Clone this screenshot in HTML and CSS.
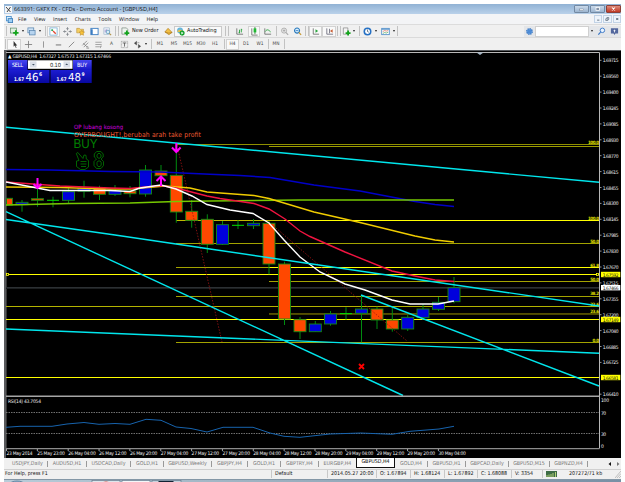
FILE: index.html
```html
<!DOCTYPE html>
<html lang="en">
<head>
  <meta charset="UTF-8" />
  <meta name="viewport" content="width=device-width, initial-scale=1.0" />
  <title>663391: GKFX FX - CFDs - Demo Account - [GBPUSD,H4]</title>
  <link rel="stylesheet" href="styles.css">
</head>
<body>
  <div class="window">
    <header class="titlebar">
      <svg class="app-icon" viewBox="0 0 7 7"><rect width="7" height="7" fill="#f4f6f8"/><path d="M1 1l4.5 5M5.5 1L2 6" stroke="#333" stroke-width=".9"/></svg>
      <span class="title">663391: GKFX FX - CFDs - Demo Account - [GBPUSD,H4]</span>
      <div class="win-buttons">
        <span class="win-btn"><svg viewBox="0 0 14 8"><rect x="4.5" y="4" width="5" height="2" fill="#fff" stroke="#56657a" stroke-width=".5"/></svg></span>
        <span class="win-btn"><svg viewBox="0 0 14 8"><rect x="5" y="2" width="4.5" height="4" fill="#8393a8" stroke="#fff"/></svg></span>
        <span class="win-btn close"><svg viewBox="0 0 14 8"><path d="M5 2l4 4M9 2L5 6" stroke="#fff" stroke-width="1.4"/></svg></span>
      </div>
    </header>

    <nav class="menubar">
      <svg class="menu-icon" viewBox="0 0 8 8"><rect x=".5" y=".5" width="5.5" height="5" fill="#d9efff" stroke="#4c91cd"/><rect x="2.5" y="3" width="5" height="4.5" fill="#9ed0f5" stroke="#3d7fba"/></svg>
      <span>File</span><span>View</span><span>Insert</span><span>Charts</span><span>Tools</span><span>Window</span><span>Help</span>
      <div class="mdi-buttons">
        <i><svg viewBox="0 0 8 8"><path d="M2.5 5.5h3" stroke="#456"/></svg></i>
        <i><svg viewBox="0 0 8 8"><path d="M3.5 3.5V2H6v2.5H5M2 3.7h2.8V6H2z" fill="none" stroke="#456" stroke-width=".8"/></svg></i>
        <i><svg viewBox="0 0 8 8"><path d="M2.6 2.6l2.8 2.8M5.4 2.6L2.6 5.4" stroke="#345"/></svg></i>
      </div>
    </nav>

    <div class="toolbar standard">
      <b class="sep"></b>
      <i><svg viewBox="0 0 10 10"><rect x=".7" y="1.2" width="6.6" height="5.5" fill="#dff1df" stroke="#5d8b6b" stroke-width=".8"/><path d="M6.5 3.5v6M3.5 6.5h6" stroke="#12a51b" stroke-width="2"/></svg></i>
      <i class="caret"></i>
      <i><svg viewBox="0 0 10 10"><rect x="1" y="1" width="6.5" height="5.5" fill="#cfe3f6" stroke="#5683ad" stroke-width=".8"/><rect x="2.8" y="4" width="6.2" height="4.8" fill="#b7d4ef" stroke="#5683ad" stroke-width=".8"/></svg></i>
      <i class="caret"></i>
      <b class="sep"></b>
      <i class="pressed"><svg viewBox="0 0 10 10"><rect x="1" y="1" width="8" height="8" fill="#fff" stroke="#68a6cf" stroke-width=".8"/><path d="M2.5 3.5h2M3.5 2.5v2" stroke="#19a34a" stroke-width="1.2"/><path d="M4.5 4.5l3 3" stroke="#e14b35" stroke-width="1.5"/></svg></i>
      <i><svg viewBox="0 0 10 10"><path d="M5 .8v8.4M.8 5h8.4M3.7 2L5 .8 6.3 2M3.7 8L5 9.2 6.3 8M2 3.7L.8 5 2 6.3M8 3.7L9.2 5 8 6.3" fill="none" stroke="#6a7077" stroke-width=".8"/><circle cx="5" cy="5" r="1.3" fill="#f0f0f0"/></svg></i>
      <i><svg viewBox="0 0 10 10"><path d="M.8 1.5h3l1 1h3.5v4H.8z" fill="#f4cf62" stroke="#b4862c" stroke-width=".6"/><path d="M6.5 3.5l1 1.9 2 .2-1.5 1.5.4 2.1-1.9-1-1.9 1 .4-2.1L3.5 5.6l2-.2z" fill="#f7c33a" stroke="#b07a1a" stroke-width=".5"/></svg></i>
      <i><svg viewBox="0 0 10 10"><rect x="1" y="1.5" width="8" height="7" fill="#fff" stroke="#3a7cc2"/><path d="M1 2.5h2v6H1z" fill="#3a7cc2"/></svg></i>
      <i><svg viewBox="0 0 10 10"><rect x="1" y="1" width="6" height="7" fill="#eef3f8" stroke="#8aa6c2" stroke-width=".6"/><path d="M2.5 3v3M4 2.5v3" stroke="#63a" stroke-width=".5"/><circle cx="5.5" cy="5.5" r="2" fill="#d5ecf8" stroke="#5593b5" stroke-width=".8"/><path d="M7 7l2 2" stroke="#b09246" stroke-width="1.2"/></svg></i>
      <b class="sep double"></b>
      <i class="labeled"><svg viewBox="0 0 10 10"><path d="M1 1h5l1.5 1.5V8H1z" fill="#eef4ee" stroke="#6d7d72" stroke-width=".7"/><path d="M6.5 4v5.5M3.8 6.7h5.4" stroke="#13a41c" stroke-width="2"/></svg><em>New Order</em></i>
      <i><svg viewBox="0 0 10 10"><path d="M1 5.5L4.5 1.5 9 6 5.5 8.5z" fill="#f3c044" stroke="#a9761b" stroke-width=".7"/><path d="M1 5.5l4.3 1.3L9 6" fill="none" stroke="#a9761b" stroke-width=".7"/></svg></i>
      <i class="labeled auto"><svg viewBox="0 0 10 10"><circle cx="4.5" cy="3.8" r="3.3" fill="#65b5dd"/><path d="M1 5c2-2.5 5-2.5 7 0L5 6z" fill="#e3c04a"/><circle cx="6.8" cy="6.8" r="2.8" fill="#16a02b"/><path d="M6 5.4v2.8l2.4-1.4z" fill="#fff"/></svg><em>AutoTrading</em></i>
      <b class="sep double"></b>
      <i><svg viewBox="0 0 10 10"><path d="M2 1.5V8h7" fill="none" stroke="#666" stroke-width=".9"/><path d="M5 3v4M4 6h1M7 2v4M7 3h1" stroke="#25a33a"/></svg></i>
      <i class="pressed"><svg viewBox="0 0 10 10"><path d="M2 1.5V9h6.5" fill="none" stroke="#666" stroke-width=".9"/><path d="M5.5 0v8" stroke="#176b20" stroke-width=".8"/><rect x="4" y="1.5" width="3" height="4.5" fill="#20b832"/></svg></i>
      <i><svg viewBox="0 0 10 10"><path d="M2 1.5V8h7" fill="none" stroke="#666" stroke-width=".9"/><path d="M2.5 5c2-3 3.5-2 6 .5" fill="none" stroke="#25a33a"/></svg></i>
      <b class="sep"></b>
      <i><svg viewBox="0 0 10 10"><circle cx="4.5" cy="4" r="2.8" fill="#eee" stroke="#999" stroke-width=".8"/><path d="M3 4h3M4.5 2.5v3" stroke="#999" stroke-width=".8"/><path d="M6.5 6l2.5 2.8" stroke="#aaa" stroke-width="1.3"/></svg></i>
      <i><svg viewBox="0 0 10 10"><circle cx="4.5" cy="4" r="2.8" fill="#d9efff" stroke="#2878bb" stroke-width="1.2"/><path d="M3 4h3" stroke="#2878bb" stroke-width=".9"/><path d="M6.5 6l2.5 2.8" stroke="#c79a35" stroke-width="1.4"/></svg></i>
      <b class="sep double"></b>
      <i class="pressed"><svg viewBox="0 0 10 10"><path d="M2.5 1.5V8H9" fill="none" stroke="#666" stroke-width=".9"/><path d="M5 2.5v4l3-2z" fill="#25a33a"/></svg></i>
      <i class="pressed"><svg viewBox="0 0 10 10"><path d="M2 1.5V8h7M5 2v5" fill="none" stroke="#667" stroke-width=".9"/><path d="M8.5 2.5v4l-3-2z" fill="#c85b30"/></svg></i>
      <b class="sep double"></b>
      <i><svg viewBox="0 0 10 10"><path d="M1.5 1h5v7h-5z" fill="#f4f4f4" stroke="#777" stroke-width=".7"/><path d="M6.8 4v5.5M4 6.7h5.5" stroke="#13a41c" stroke-width="2"/></svg></i>
      <i class="caret"></i>
      <b class="sep"></b>
      <i><svg viewBox="0 0 10 10"><circle cx="5" cy="5" r="3.6" fill="#fff" stroke="#2671c4" stroke-width="1.7"/><path d="M5 2.8V5l1.5.8" fill="none" stroke="#234" stroke-width=".7"/></svg></i>
      <i class="caret"></i>
      <i><svg viewBox="0 0 10 10"><rect x=".8" y="1.5" width="8.4" height="7" fill="#fff" stroke="#4b8ac6" stroke-width=".9"/><path d="M1 2.5h8" stroke="#4b8ac6"/><path d="M2 5l2-1 2 .5L8 4" fill="none" stroke="#d0563c" stroke-width=".7"/><path d="M2 7.2l2-1 2 .5 2-1" fill="none" stroke="#3a9a48" stroke-width=".7"/></svg></i>
      <i class="caret"></i>
      <b class="end"></b>
      <span></span>
      <i class="tool-box"><svg viewBox="0 0 10 10"><circle cx="5" cy="5" r="3" fill="#79aee6" stroke="#3b78c4" stroke-width="1.6" stroke-dasharray="1.5 .8"/><circle cx="5" cy="5" r="2.2" fill="#4d8bd6"/></svg></i>
      <input class="search" type="text" aria-label="Search">
      <i class="caret tool-box"></i>
      <i class="tool-box"><svg viewBox="0 0 10 10"><circle cx="6" cy="3.7" r="2.5" fill="#eaf4ff" stroke="#3674c5"/><path d="M4 5.6L1.5 8.5" stroke="#3674c5" stroke-width="1.3"/></svg></i>
      <i class="tool-box"><svg viewBox="0 0 10 10"><path d="M1 1.5h8v5.8H6L5 9 4 7.3H1z" fill="#53679d"/><path d="M5 3v3M4 4h2" stroke="#fff" stroke-width=".9"/></svg></i>
    </div>

    <div class="toolbar studies">
      <b class="sep"></b>
      <i class="pressed"><svg viewBox="0 0 10 10"><path d="M4 1v6.5l1.4-1.3L6.5 9l.8-.4L6.2 6H8z" fill="#333"/></svg></i>
      <i><svg viewBox="0 0 10 10"><path d="M5 1v8M1 5h8" stroke="#777" stroke-width=".9"/></svg></i>
      <i><svg viewBox="0 0 10 10"><path d="M5 1.5v7" stroke="#777" stroke-width=".8"/></svg></i>
      <i><svg viewBox="0 0 10 10"><path d="M2 5.5h6" stroke="#666"/></svg></i>
      <i><svg viewBox="0 0 10 10"><path d="M2 8l6-6" stroke="#777" stroke-width=".9"/></svg></i>
      <i><svg viewBox="0 0 10 10"><path d="M1.5 6l5-5M3 8l5-5M2.5 3.5l4 4M6 9h3M6 7.5h2" stroke="#777" stroke-width=".8"/></svg></i>
      <i><svg viewBox="0 0 10 10"><path d="M1.5 2.5h7M1.5 5h7M1.5 7.5h5M7.2 9V6.8h1.6" fill="none" stroke="#888" stroke-width=".8"/></svg></i>
      <i>A</i>
      <i><svg viewBox="0 0 10 10"><rect x="1.5" y="1.5" width="7" height="7" fill="none" stroke="#888" stroke-width=".7" stroke-dasharray="1 .5"/><path d="M3 3.3h4M5 3.3v4" stroke="#555" stroke-width=".9"/></svg></i>
      <i><svg viewBox="0 0 10 10"><path d="M1.5 3.5L4 1.5v4zM5 3h2M8.5 7L6 5v4z" fill="#444" stroke="#444" stroke-width=".5"/></svg></i>
      <i class="caret"></i>
      <b class="sep"></b>
      <i>M1</i><i>M5</i><i>M15</i><i>M30</i><i>H1</i>
      <b class="sep"></b>
      <i class="pressed">H4</i><i>D1</i><i>W1</i>
      <b class="sep"></b>
      <i>MN</i>
      <b class="end"></b>
    </div>

    <main class="chart">
      <svg id="chart" viewBox="4 50 617 408">
        <rect x="4" y="50" width="617" height="408" fill="#000"/>
        <path d="M4 50.5H621" stroke="#55585c"/>
        <path d="M5 51v407" stroke="#77797b" stroke-width="1.5"/>
        <path d="M6.5 51v398" stroke="#444" stroke-width=".8"/>
        <path d="M6 52.5H599.5V448.5" fill="none" stroke="#b8b8b8"/>
        <path d="M476.5 52.5h7l-3.5 2.5z" fill="#a9b9c9"/>

        <g id="levels"></g>
        <g id="candles"></g>

        <g class="fibo">
          <path d="M177 145L222 342M269 222L407 341"/>
        </g>
        <g class="ma">
          <path class="navy" d="M6 169.5L50 170 110 171.5 160 172 210 174.3 240 175.5 270 177.5 314 185 360 191 415 201.5 435 204.5 454 206.5"/>
          <path class="lime" d="M6 205L70 203.5 130 203 176 201.5 210 201 300 200 454 200"/>
          <path class="gold" d="M6 187L60 187.5 110 189 130 189 165 186 190 188 207 192 254 195.5 269 198.5 314 212 360 222.5 415 236 435 240 454 242"/>
          <path class="crimson" d="M6 182L60 186 110 188 130 188.5 161 185.5 176 188 207 196 220 198.5 254 203.5 269 209 285 219 300 231 310 236.5 345 252 392 271 415 276 435 280 454 281.5"/>
          <path class="white" d="M6 182L50 190.5 110 190.5 130 191.5 140 188 161 185 176 189 192 196 207 204.5 230 210 253 213.5 269 223 284 240 300 257 320 272 345 284 365 290 392 300 410 304 438 304 454 301"/>
        </g>
        <g class="trend">
          <path d="M6 127.3L599 182.3M6 219.5L115 235 210 249 599 306M6 211.7L403 395.5M361 295L599 386M6 329L599 353.3"/>
        </g>

        <g class="arrows">
          <path d="M37.5 178v10M33.5 184l4 4 4-4M176.300 143v9M172 147.5l4.300 4.5 4.300-4.5M161 186v-9M156.500 181l4.5-4.5 4.5 4.5"/>
        </g>
        <path d="M359 364l5 5M364 364l-5 5" stroke="#f00" stroke-width="1.8"/>
        <rect x="6.5" y="273.5" width="2" height="2" fill="#000" stroke="#ff0" stroke-width=".8"/>
        <rect x="596.5" y="273.5" width="2" height="2" fill="#000" stroke="#ff0" stroke-width=".8"/>

        <text class="note magenta" x="74" y="128.7" textLength="49">OP lubang kosong</text>
        <text class="note tomato" x="74" y="136.8" textLength="127">OVERBOUGHT!,berubah arah take profit</text>
        <text class="buy" x="73.5" y="147.6" textLength="24" lengthAdjust="spacingAndGlyphs">BUY</text>
        <g class="hand">
          <path d="M76.300 153.500l1.500-1 5.200 6 1-3.500 2 .3.300 3.700 2.200 1.500v6.500l-3.500 2.500h-4.500l-4-3v-5.500l2.500-.5zM80.500 161.500h6M80.500 164h6M81 166.500h5"/>
          <path d="M96.700 151.500h4.200l2.300 2.500v3l-2.200 2 2.500 2.500v4l-2.500 3h-4.500l-2.500-3v-4l2.500-2.500-2.200-2v-3zM98 153.500h2l1 1.500v2l-2 1.500-2-1.500v-2zM98 161h2.200l1 1.500v2.500l-1 1.500H98l-1-1.500v-2.500z"/>
        </g>

        <text class="info" x="8" y="58.3" textLength="103">▲ GBPUSD,H4  1.67327 1.67573 1.67315 1.67466</text>

        <!-- one click trading panel -->
        <defs>
          <linearGradient id="blue" x1="0" y1="0" x2="0" y2="1">
            <stop offset="0" stop-color="#4646f2"/><stop offset="1" stop-color="#1717c8"/>
          </linearGradient>
          <linearGradient id="deep" x1="0" y1="0" x2="0" y2="1">
            <stop offset="0" stop-color="#1c1cd2"/><stop offset="1" stop-color="#0808a0"/>
          </linearGradient>
        </defs>
        <g class="trade">
          <rect x="8" y="60" width="19.5" height="10" fill="url(#blue)"/>
          <rect x="73" y="60" width="18.7" height="10" fill="url(#blue)"/>
          <rect x="8" y="70" width="41.5" height="13" fill="url(#deep)"/>
          <rect x="50.5" y="70" width="41.2" height="13" fill="url(#deep)"/>
          <rect x="28" y="60.3" width="44.5" height="8.5" fill="#fff"/>
          <rect x="30" y="61.3" width="6.5" height="6.2" fill="#d9dee8"/>
          <rect x="63.5" y="61.3" width="6.5" height="6.2" fill="#d9dee8"/>
          <path d="M32 64h2.8l-1.4 1.5zM65.3 65h2.8l-1.4-1.5z" fill="#456"/>
          <text x="12" y="66.9" textLength="11">SELL</text>
          <text x="77" y="66.9" textLength="10">BUY</text>
          <text x="50" y="66.6" textLength="11" class="lot">0.10</text>
          <text x="14" y="80.5" textLength="10" class="small" lengthAdjust="spacingAndGlyphs">1.67</text>
          <text x="25.5" y="80.5" textLength="13" class="big" lengthAdjust="spacingAndGlyphs">46</text>
          <text x="38.9" y="76" class="sup">6</text>
          <text x="56.5" y="80.5" textLength="10" class="small" lengthAdjust="spacingAndGlyphs">1.67</text>
          <text x="68" y="80.5" textLength="13" class="big" lengthAdjust="spacingAndGlyphs">48</text>
          <text x="81.5" y="76" class="sup">9</text>
        </g>

        <!-- RSI sub window -->
        <path d="M6 396.3H599.5" stroke="#a6a6a6" stroke-width="1.5"/>
        <path d="M6 448.7H599.5" stroke="#8c8c8c" stroke-width="1.3"/>
        <path d="M6 412.5H599M6 433.5H599" stroke="#8d8d8d" stroke-width=".8" stroke-dasharray="1.5 1"/>
        <path d="M6 427.3L20 426.3 52 426.3 67 424 84 422.5 99 424.3 115 423.5 130 424.3 146 419.3 161 420.3 176 427 191 428.5 207 432 223 427.3 253 427.3 270 433 284 436.3 300 437.3 330 434 361 433 392 434.3 410 431.3 439 429 454 426.3" fill="none" stroke="#1763ad"/>
        <text class="info" x="8" y="403" textLength="33">RSI(14) 43.7054</text>
        <text class="info" x="601" y="402" textLength="8">100</text>
        <text class="info" x="601" y="414.5" textLength="5">70</text>
        <text class="info" x="601" y="435.5" textLength="5">30</text>
        <text class="info" x="601" y="448">0</text>
        <g id="axis"></g>
      </svg>
    </main>

    <div class="tabs">
      <span>USDJPY,Daily</span><span>AUDUSD,H1</span><span>USDCAD,Daily</span><span>GOLD,H1</span><span>GBPUSD,Weekly</span><span>GBPJPY,H4</span><span>GOLD,H1</span><span>GBPTRY,H4</span><span class="last">EURGBP,H4</span><span class="active">GBPUSD,H4</span><span>GOLD,H4</span><span>GBPUSD,H1</span><span>GBPCAD,Daily</span><span>GBPUSD,M15</span><span>GBPNZD,H4</span>
      <svg class="scroller" viewBox="0 0 14 6"><path d="M4 1v4L1.5 3z" fill="#111"/><path d="M10 1v4l2.5-2z" fill="#777"/></svg>
    </div>

    <footer class="status">
      <span>For Help, press F1</span>
      <span>Default</span>
      <span>2014.05.27 20:00</span>
      <span>O: 1.67894</span>
      <span>H: 1.68124</span>
      <span>L: 1.67892</span>
      <span>C: 1.68088</span>
      <span>V: 3354</span>
      <span class="net"><svg viewBox="0 0 11 6"><rect width="11" height="6" fill="#3d6b45"/><path d="M1 6V4M3 6V3.5M5 6V3M7 6V2M9.5 6V1" stroke="#b8d37a"/></svg></span>
      <span class="traffic">207272/71 kb</span>
      <svg class="grip" viewBox="0 0 6 7"><path d="M0 7l6-7M2 7l4-4.5M4 7l2-2" stroke="#aaa" stroke-width=".7"/></svg>
    </footer>

    <div class="taskbar">
      <svg viewBox="0 0 617 4">
        <ellipse cx="13" cy="4" rx="7" ry="3" fill="#8fb3cf" stroke="#4f6f8c" stroke-width=".7"/>
        <rect x="66" y="2" width="8" height="2" fill="#cfa964"/>
        <rect x="88" y=".5" width="28" height="4" fill="#dde6ec" stroke="#667b8d" stroke-width=".7"/>
        <ellipse cx="102" cy="4" rx="4" ry="2.5" fill="#d94a3c"/>
        <rect x="118" y=".5" width="28" height="4" fill="#f4f7f9" stroke="#667b8d" stroke-width=".7"/>
        <rect x="148" y=".5" width="29" height="4" fill="#c5d3dd" stroke="#667b8d" stroke-width=".7"/>
        <rect x="155" y="1.5" width="14" height="3" fill="#fff" stroke="#123"/>
      </svg>
    </div>
  </div>

  <script>
    const NS = "http://www.w3.org/2000/svg";

    function add(parent, tag, attrs, text) {
      const el = document.createElementNS(NS, tag);
      for (const key in attrs) el.setAttribute(key, attrs[key]);
      if (text) el.textContent = text;
      document.getElementById(parent).appendChild(el);
    }

    // x start, y, colour
    const levels = [
      [176, 144.5, "#8f8f00"], [269, 146.5, "#9c9c00"],
      [176, 220.5, "#c0b800"], [284, 220.5, "#ffff00"],
      [176, 243.5, "#a3a300"], [176, 267.5, "#a3a300"], [269, 267.5, "#ffff00"],
      [6, 274.5, "#ffff00"], [269, 281.5, "#a3a300"],
      [6, 287.5, "#2c3033"], [6, 288.5, "#1c1f21"], [176, 296.5, "#a3a300"],
      [6, 306.5, "#b3b300"], [269, 313.5, "#555000"], [269, 314.5, "#4a4600"],
      [6, 319.5, "#ffff00"], [176, 342.5, "#a3a300"], [6, 377.5, "#ffff00"]
    ];
    levels.forEach(([x, y, c]) => add("levels", "path", { d: `M${x} ${y}H599`, stroke: c }));

    const ratios = [["100.0", 143.6], ["100.0", 219.6], ["50.0", 242.6], ["61.8", 266.6], ["50.0", 280.6],
      ["38.2", 295.4], ["23.6", 305.6], ["23.6", 313], ["0.0", 341.6]];
    ratios.forEach(([t, y]) => {
      const w = t.length * 2.2;
      add("levels", "text", { x: 599 - w, y: y, textLength: w, class: "ratio" }, t);
    });

    // x, high, body top, body bottom, low, type
    const candles = [
      [6.5, 198, 198.3, 205, 206, "down"], [22, 200, 202.3, 204.7, 211.7, "up"],
      [37.5, 189, 198.7, 200.3, 206.7, "down"], [53, 196.7, 200.3, 200.3, 207.3, "doji"],
      [68.5, 187.7, 191.7, 200.3, 204, "up"], [84, 180.7, 188.3, 191.3, 197.7, "up"],
      [99.5, 185.7, 187.7, 194.3, 200, "down"], [115, 185, 190.7, 194.3, 196, "up"],
      [130, 186, 191, 193.7, 197.3, "down"], [145.5, 165, 170, 194, 196.7, "up"],
      [161, 165, 171, 175.7, 185, "down"], [176.3, 144, 175.3, 212, 222.7, "down"],
      [191.7, 200, 211.3, 220.3, 227.7, "down"], [207.3, 214.3, 219.3, 244.3, 253, "down"],
      [222.5, 221, 224.7, 244.3, 245, "up"], [238, 220.3, 225.3, 225.3, 229, "doji"],
      [253.5, 219, 223.3, 225.7, 229, "up"], [269, 221, 223.3, 264, 274.3, "down"],
      [284.5, 261.7, 264, 319, 325, "down"], [300, 317, 319.7, 331.7, 339, "down"],
      [315.3, 321, 324, 331.7, 332, "up"], [330.5, 311, 314, 324, 325.7, "up"],
      [346, 307.3, 313.6, 313.6, 319.7, "doji"], [361.5, 295, 309, 313.3, 342.3, "up"],
      [377, 306.7, 309, 320, 329, "down"], [392.3, 306.7, 320, 329, 331.7, "down"],
      [407.7, 315, 317.3, 329, 331, "up"], [423, 304.3, 309, 317.7, 320, "up"],
      [438.5, 297, 302.3, 309.3, 311, "up"], [454, 277, 287.7, 301.7, 303.3, "up"]
    ];
    candles.forEach(([x, high, top, bottom, low, type]) => {
      add("candles", "path", { d: `M${x} ${high}V${low}`, class: "wick" });
      if (type === "doji") {
        add("candles", "path", { d: `M${x - 6} ${top}h12`, class: "doji" });
      } else {
        const left = Math.max(x - 6, 6.5);
        add("candles", "rect", { x: left, y: top, width: x + 6 - left, height: bottom - top, class: type });
      }
    });

    const prices = ["1.69715", "1.69560", "1.69400", "1.69245", "1.69085", "1.68930", "1.68770", "1.68615",
      "1.68455", "1.68300", "1.68145", "1.67985", "1.67830", "1.67670", "1.67515", "1.67355", "1.67200",
      "1.67040", "1.66885", "1.66725", "", "1.66410"];
    prices.forEach((p, i) => {
      if (!p) return;
      const y = 60.3 + i * 15.9;
      add("axis", "path", { d: `M599.5 ${y}h2`, stroke: "#b8b8b8", "stroke-width": 0.8 });
      add("axis", "text", { x: 602.7, y: y + 2, textLength: 15.8, class: "info" }, p);
    });

    const marks = [["1.67592", 274.5, "#ffff00"], ["1.67466", 287.7, "#ffffff"],
      ["1.67149", 319.5, "#ffff00"], ["1.66581", 377.5, "#ffff00"]];
    marks.forEach(([p, y, c]) => {
      add("axis", "rect", { x: 601, y: y - 2.7, width: 19.3, height: 5.4, fill: c });
      add("axis", "text", { x: 602.7, y: y + 2, textLength: 15.8, class: "mark" }, p);
    });

    const dates = ["23 May 2014", "25 May 23:00", "26 May 04:00", "26 May 12:00", "26 May 20:00", "27 May 04:00",
      "27 May 12:00", "27 May 20:00", "28 May 04:00", "28 May 12:00", "28 May 20:00", "29 May 04:00",
      "29 May 12:00", "29 May 20:00", "30 May 04:00"];
    dates.forEach((d, i) => {
      const x = 6.5 + i * 30.85;
      add("axis", "path", { d: `M${x} 449v2`, stroke: "#ccc", "stroke-width": 0.8 });
      add("axis", "text", { x: x, y: 455.2, textLength: i ? 27.5 : 26, class: "info" }, d);
    });
  </script>
</body>
</html>
```
FILE: styles.css
```css
* {
  box-sizing: border-box;
}
body {
  margin: 0;
  padding: 4px 4px 0;
  height: 482px;
  overflow: hidden;
  background: #fff;
  font-family: "DejaVu Sans Condensed", "DejaVu Sans", sans-serif;
  font-stretch: condensed;
  font-size: 5.3px;
  color: #111;
  text-rendering: geometricPrecision;
}
i, em {
  font-style: normal;
}
svg {
  display: block;
}
.window {
  display: flex;
  flex-direction: column;
  width: 617px;
  height: 478px;
  overflow: hidden;
  background: #f0f0f0;
}
.window > * {
  flex-shrink: 0;
}

/* title and menu */
.titlebar {
  display: flex;
  align-items: center;
  height: 10px;
  padding-left: 1px;
  background: linear-gradient(#91b2d4, #b9d1ea);
  font-family: "Open Sans", sans-serif;
  font-stretch: normal;
  font-size: 5.6px;
}
.app-icon {
  width: 7px;
  height: 7px;
  margin-right: 2px;
}
.title {
  white-space: nowrap;
}
.win-buttons {
  display: flex;
  gap: 1px;
  margin-left: auto;
}
.win-btn {
  width: 15px;
  height: 8px;
  border: 1px solid #7289a3;
  border-radius: 1px;
  background: linear-gradient(#c9d9ea, #9cb5d0);
}
.win-btn svg {
  width: 13px;
  height: 6px;
}
.win-btn.close {
  border-color: #8b4038;
  background: linear-gradient(#df8d7d, #c03823);
}
.menubar {
  display: flex;
  align-items: center;
  height: 11px;
  padding-left: 2px;
  background: #f3f4f6;
  border-bottom: 1px solid #dcdcdc;
  font-family: "Open Sans", sans-serif;
  font-stretch: normal;
  font-size: 5.3px;
}
.menu-icon {
  width: 7px;
  height: 7px;
  margin-right: 5px;
}
.menubar > span {
  margin-right: 7.5px;
}
.mdi-buttons {
  display: flex;
  gap: 1px;
  margin-left: auto;
}
.mdi-buttons i {
  width: 8.5px;
  height: 8px;
  border: 1px solid #c2d3e6;
  background: #eef4fb;
}
.mdi-buttons svg {
  width: 6.5px;
  height: 6px;
}

/* toolbars */
.toolbar {
  display: grid;
  align-items: center;
}
.standard {
  height: 12px;
  grid-template-columns: 5px 10px 7px 11px 6px 4px 13px 14px 13px 14px 13px 6px 42px 12px 48px 9px 17px 12px 14px 4px 13px 13px 5px 13px 14px 6px 8px 7px 4px 12px 6px 12px 5px 3px 1fr 11px 54px 6px 12px 14px;
}
.studies {
  height: 13px;
  grid-template-columns: 3px 14px 14px 17px 12px 14px 14px 13px 13px 13px 12px 6px 4px 14px 14px 13px 14px 14px 4px 13px 14px 14px 2px 14px 2px;
  border-top: 1px solid #dadada;
}
.toolbar i {
  display: flex;
  align-items: center;
  justify-content: center;
  height: 11px;
  color: #444;
}
.studies i {
  font-size: 4.8px;
}
.toolbar i svg {
  flex: none;
  width: 9px;
  height: 9px;
}
.toolbar .pressed {
  background: #f9f9f9;
  border: 1px solid #d2d2d2;
}
.toolbar .labeled {
  justify-content: flex-start;
  gap: 2px;
  padding-left: 1px;
  color: #111;
  font-size: 5.5px;
  white-space: nowrap;
}
.toolbar .auto {
  background: #fafafa;
  border: 1px solid #c9c9c9;
}
.caret::after {
  content: "";
  border: 1.5px solid transparent;
  border-top: 2px solid #222;
  border-bottom: 0;
}
.sep, .end {
  height: 10px;
  justify-self: center;
  border-left: 1px solid #c2c2c2;
}
.sep.double {
  width: 4px;
  border-right: 1px solid #c2c2c2;
}
.toolbar .tool-box {
  background: #e4e6e9;
}
.search {
  width: 54px;
  height: 11px;
  padding: 0;
  border: 1px solid #d0d0d0;
  background: #fff;
}

/* chart */
.chart {
  height: 408px;
}
#chart {
  width: 617px;
  height: 408px;
}
.ma path, .trend path, .arrows path, .fibo path {
  fill: none;
  stroke-width: 1.4;
}
.trend path {
  stroke: #00e6ec;
}
.fibo path {
  stroke: #a01414;
  stroke-width: .8;
  stroke-dasharray: 1.5 1.5;
}
.arrows path {
  stroke: #f0f;
  stroke-width: 2;
}
.navy { stroke: #0000c8; }
.lime { stroke: #76c800; }
.gold { stroke: #f0cc00; }
.crimson { stroke: #f01440; }
.white { stroke: #fff; }
.wick, .doji {
  stroke: #008c10;
}
.doji {
  stroke: #00e000;
}
.up, .down {
  stroke: #138a13;
  stroke-width: .9;
}
.up { fill: #0000dc; }
.down { fill: #ff4800; }
.info, .mark, .ratio {
  font-size: 4.9px;
  fill: #f2f2f2;
  white-space: pre;
}
.mark {
  fill: #111;
}
.ratio {
  fill: #e0e000;
  font-size: 4.5px;
  font-weight: bold;
}
.note {
  font-size: 6.8px;
}
.magenta {
  fill: #d800e0;
  font-size: 5.9px;
}
.tomato { fill: #f05a32; }
.buy {
  fill: #008000;
  font-family: "Liberation Sans", sans-serif;
  font-stretch: normal;
  font-size: 13px;
}
.hand path {
  fill: none;
  stroke: #007c00;
  stroke-width: .8;
}
.trade text {
  fill: #fff;
  font-size: 5.7px;
}
.trade .lot {
  fill: #222;
}
.trade .small {
  font-size: 5px;
  font-weight: bold;
}
.trade .big {
  font-size: 11px;
}
.trade .sup {
  font-size: 5px;
  font-weight: bold;
}

/* bottom bars */
.tabs {
  display: grid;
  grid-template-columns: 40px 39px 44px 33px 48px 36px 33px 38px 37px 39px 33px 38px 43px 41px 38px 1fr;
  align-items: center;
  height: 11px;
  padding-left: 4px;
  color: #777;
}
.tabs span {
  height: 6px;
  line-height: 6px;
  border-right: 1px solid #999;
  text-align: center;
  white-space: nowrap;
}
.tabs .last {
  border-right: 0;
}
.tabs .active {
  height: 10px;
  line-height: 8px;
  align-self: start;
  border: 1px solid #111;
  border-top: 0;
  background: #fff;
  color: #000;
}
.scroller {
  width: 14px;
  height: 6px;
  justify-self: end;
}
.status {
  display: grid;
  grid-template-columns: 267px 56px 49px 34px 34px 33px 34px 31px 22px 1fr 6px;
  align-items: center;
  height: 9.7px;
  border-top: 1px solid #d0d0d0;
}
.status span {
  height: 8px;
  line-height: 8px;
  padding-left: 3px;
  border-left: 1px solid #c8c8c8;
  white-space: nowrap;
}
.status span:first-child {
  padding-left: 1px;
  border-left: 0;
}
.status .net svg {
  width: 11px;
  height: 6px;
  margin-top: 1px;
}
.status .traffic {
  border-left: 0;
  padding-left: 5px;
}
.grip {
  width: 6px;
  height: 7px;
}
.taskbar {
  height: 4px;
  background: linear-gradient(90deg, #b8ccd9, #9fb3c2 40%, #7890a5);
  border-top: 1px solid #8497a6;
}
.taskbar svg {
  width: 617px;
  height: 4px;
}
```
